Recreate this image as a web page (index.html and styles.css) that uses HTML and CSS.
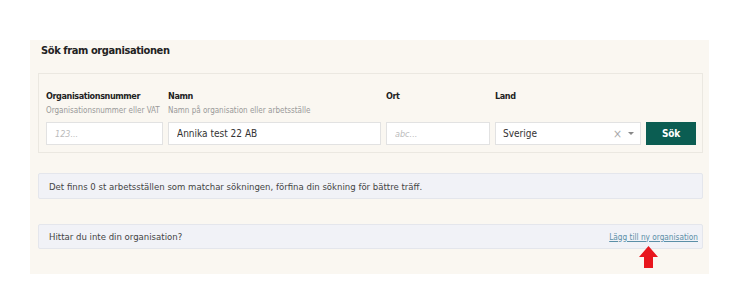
FILE: index.html
```html
<!DOCTYPE html>
<html lang="sv">
<head>
    <meta charset="UTF-8">
    <meta name="viewport" content="width=device-width, initial-scale=1.0">
    <title>Sök organisation</title>
    <link rel="stylesheet" href="styles.css">
</head>
<body>
    <div class="panel">
        <h2 class="title">Sök fram organisationen</h2>

        <div class="search-box">
            <label class="label">Organisationsnummer</label>
            <label class="label">Namn</label>
            <label class="label">Ort</label>
            <label class="label">Land</label>
            <span></span>

            <span class="help">Organisationsnummer eller VAT</span>
            <span class="help">Namn på organisation eller arbetsställe</span>
            <span></span>
            <span></span>
            <span></span>

            <input type="text" class="field" placeholder="123...">
            <input type="text" class="field" value="Annika test 22 AB">
            <input type="text" class="field" placeholder="abc...">
            <div class="field select">
                <span>Sverige</span>
                <span class="select-icons"><span class="clear">×</span><span class="caret"></span></span>
            </div>
            <button class="search-button">Sök</button>
        </div>

        <div class="message">Det finns 0 st arbetsställen som matchar sökningen, förfina din sökning för bättre träff.</div>

        <div class="message add-row">
            <span>Hittar du inte din organisation?</span>
            <a href="#" class="add-link">Lägg till ny organisation</a>
            <svg class="arrow" width="19" height="22" viewBox="0 0 19 22">
                <polygon points="9.5,0 19,11 14,11 14,22 5,22 5,11 0,11" fill="#e8161d"/>
            </svg>
        </div>
    </div>
</body>
</html>
```

FILE: styles.css
```css
body {
    margin: 0;
    background: #ffffff;
    font-family: "DejaVu Sans Condensed", "Liberation Sans", sans-serif;
    color: #333;
}

.panel {
    margin: 40px 0 0 30px;
    width: 679px;
    height: 234px;
    box-sizing: border-box;
    padding: 0 6px 0 8px;
    background: #faf7f1;
}

.title {
    margin: 0 0 14px 3px;
    padding-top: 3px;
    font-size: 11px;
    line-height: 16px;
    letter-spacing: -0.4px;
    font-weight: bold;
    color: #222;
}

.search-box {
    display: grid;
    grid-template-columns: 117px 213px 104px 146px 50px;
    column-gap: 5px;
    padding: 16px 7px 7px 7px;
    border: 1px solid #ebe8e1;
    height: 80px;
    box-sizing: border-box;
}

.label {
    font-size: 9px;
    line-height: 12px;
    letter-spacing: -0.4px;
    font-weight: bold;
    color: #222;
    margin-bottom: 3px;
}

.help {
    font-size: 8px;
    line-height: 12px;
    color: #999;
    white-space: nowrap;
    margin-bottom: 5px;
}

.field {
    box-sizing: border-box;
    height: 23px;
    margin: 0;
    padding: 0 8px;
    border: 1px solid #e2e2e2;
    background: #fff;
    font-family: inherit;
    font-size: 10px;
    color: #333;
}

.field::placeholder {
    color: #bbb;
    font-style: italic;
    font-size: 9px;
}

.select {
    display: flex;
    align-items: center;
    justify-content: space-between;
    padding: 0 6px 0 7px;
}

.select-icons {
    display: flex;
    align-items: center;
    gap: 6px;
}

.clear {
    color: #aaa;
    font-size: 12px;
}

.caret {
    width: 0;
    height: 0;
    border-left: 3px solid transparent;
    border-right: 3px solid transparent;
    border-top: 3px solid #888;
}

.search-button {
    height: 23px;
    border: none;
    background: #0b5d52;
    color: #fff;
    font-family: inherit;
    font-weight: bold;
    font-size: 10px;
    letter-spacing: -0.2px;
    cursor: pointer;
}

.message {
    position: relative;
    box-sizing: border-box;
    margin-top: 20px;
    height: 26px;
    padding: 0 4px 0 10px;
    display: flex;
    align-items: center;
    background: #f1f2f7;
    border: 1px solid #e4e6ec;
    border-radius: 2px;
    font-size: 9.5px;
    color: #444;
}

.add-row {
    margin-top: 25px;
    height: 25px;
    justify-content: space-between;
}

.add-link {
    color: #5b8fa7;
    font-size: 8.2px;
}

.arrow {
    position: absolute;
    right: 44px;
    top: 21px;
}
```
